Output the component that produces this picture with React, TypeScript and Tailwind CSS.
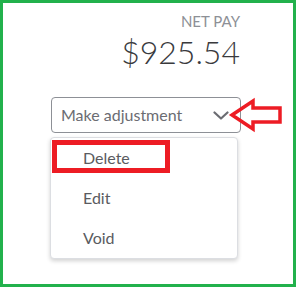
const font = "font-['Lato','Open_Sans',sans-serif]";

const menuItems = ['Delete', 'Edit', 'Void'];

function Chevron() {
  return (
    <svg width="16" height="9" viewBox="0 0 16 9" className="flex-none">
      <path d="M1.5 1.5 L8 7.5 L14.5 1.5" fill="none" stroke="#6b6c72" strokeWidth="2.2" strokeLinecap="round" strokeLinejoin="round" />
    </svg>
  );
}

export default function App() {
  return (
    <div className={`relative h-[287px] w-[296px] overflow-hidden border-[3px] border-[#22b14c] bg-white ${font}`}>
      <div className="flex flex-col items-end pr-[53px] pt-[9px]">
        <p className="text-[15px] leading-[18px] text-[#8d9096]">NET PAY</p>
        <p className="mt-[3px] text-[32px] leading-[38px] font-light text-[#393a3d]">$925.54</p>
      </div>

      <div className="ml-[48px] mt-[26px] flex h-[36px] w-[190px] items-center justify-between rounded-[4px] border border-[#8d9096] pl-[9px] pr-[11px]">
        <span className="text-[16px] leading-[18px] text-[#6b6c72]">Make adjustment</span>
        <Chevron />
      </div>

      <ul className="ml-[47px] mt-[4px] w-[188px] rounded-[4px] border border-[#dcdee2] bg-white shadow-[0_2px_4px_rgba(0,0,0,0.18)]">
        {menuItems.map((item) => (
          <li key={item} className="flex h-[40px] items-center pl-[32px] text-[16px] leading-[18px] text-[#5a5b60]">
            {item}
          </li>
        ))}
      </ul>

      {/* annotations */}
      <div className="absolute left-[49px] top-[137px] h-[33px] w-[118px] border-[5px] border-[#ed1c24]" />
      <svg className="absolute left-[-3px] top-[-3px]" width="296" height="287" viewBox="0 0 296 287">
        <polygon
          points="232,115 253,101 253,108 280,108 280,122 253,122 253,129"
          fill="none"
          stroke="#ed1c24"
          strokeWidth="3.5"
          strokeLinejoin="miter"
        />
      </svg>
    </div>
  );
}
